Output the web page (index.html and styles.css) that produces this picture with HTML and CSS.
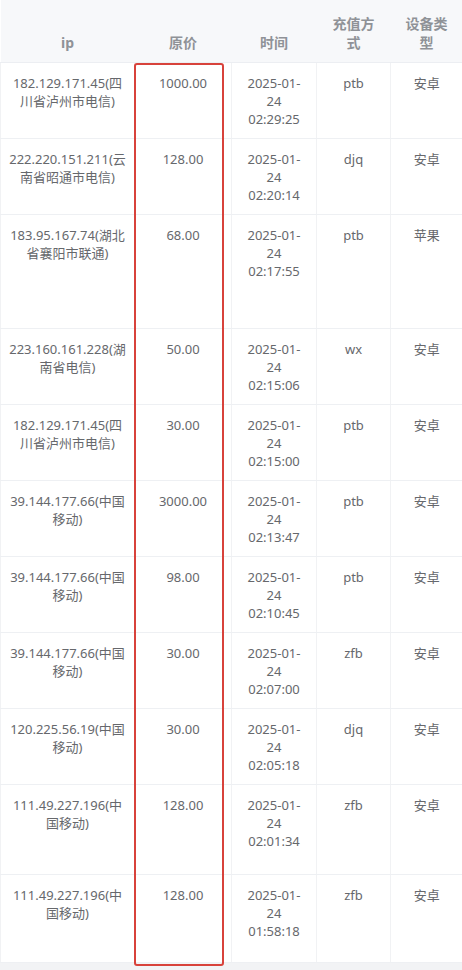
FILE: index.html
```html
<!DOCTYPE html>
<html lang="zh-CN">
<head>
<meta charset="utf-8">
<title>充值记录</title>
<link rel="stylesheet" href="styles.css">
</head>
<body>
<div class="wrap">
  <table class="grid">
    <colgroup>
      <col class="c-ip"><col class="c-price"><col class="c-time"><col class="c-pay"><col class="c-dev">
    </colgroup>
    <thead>
      <tr>
        <th>ip</th>
        <th>原价</th>
        <th>时间</th>
        <th>充值方<br>式</th>
        <th>设备类<br>型</th>
      </tr>
    </thead>
    <tbody>
      <tr class="h76">
        <td>182.129.171.45(四<br>川省泸州市电信)</td><td>1000.00</td><td>2025-01-<br>24<br>02:29:25</td><td>ptb</td><td>安卓</td>
      </tr>
      <tr class="h76">
        <td>222.220.151.211(云<br>南省昭通市电信)</td><td>128.00</td><td>2025-01-<br>24<br>02:20:14</td><td>djq</td><td>安卓</td>
      </tr>
      <tr class="h114">
        <td>183.95.167.74(湖北<br>省襄阳市联通)</td><td>68.00</td><td>2025-01-<br>24<br>02:17:55</td><td>ptb</td><td>苹果</td>
      </tr>
      <tr class="h76">
        <td>223.160.161.228(湖<br>南省电信)</td><td>50.00</td><td>2025-01-<br>24<br>02:15:06</td><td>wx</td><td>安卓</td>
      </tr>
      <tr class="h76">
        <td>182.129.171.45(四<br>川省泸州市电信)</td><td>30.00</td><td>2025-01-<br>24<br>02:15:00</td><td>ptb</td><td>安卓</td>
      </tr>
      <tr class="h76">
        <td>39.144.177.66(中国<br>移动)</td><td>3000.00</td><td>2025-01-<br>24<br>02:13:47</td><td>ptb</td><td>安卓</td>
      </tr>
      <tr class="h76">
        <td>39.144.177.66(中国<br>移动)</td><td>98.00</td><td>2025-01-<br>24<br>02:10:45</td><td>ptb</td><td>安卓</td>
      </tr>
      <tr class="h76">
        <td>39.144.177.66(中国<br>移动)</td><td>30.00</td><td>2025-01-<br>24<br>02:07:00</td><td>zfb</td><td>安卓</td>
      </tr>
      <tr class="h76">
        <td>120.225.56.19(中国<br>移动)</td><td>30.00</td><td>2025-01-<br>24<br>02:05:18</td><td>djq</td><td>安卓</td>
      </tr>
      <tr class="h90">
        <td>111.49.227.196(中<br>国移动)</td><td>128.00</td><td>2025-01-<br>24<br>02:01:34</td><td>zfb</td><td>安卓</td>
      </tr>
      <tr class="h88">
        <td>111.49.227.196(中<br>国移动)</td><td>128.00</td><td>2025-01-<br>24<br>01:58:18</td><td>zfb</td><td>安卓</td>
      </tr>
    </tbody>
  </table>
  <div class="highlight"></div>
</div>
</body>
</html>
```
FILE: styles.css
```css
html, body {
  margin: 0;
  padding: 0;
  background: #f2f3f5;
}
body {
  width: 462px;
  height: 970px;
  overflow: hidden;
  font-family: "Noto Sans", "Noto Sans CJK SC", sans-serif;
}
.wrap {
  position: relative;
  width: 462px;
  background: #ffffff;
}
.grid {
  width: 462px;
  border-collapse: collapse;
  table-layout: fixed;
}
.c-ip { width: 134px; }
.c-price { width: 97px; }
.c-time { width: 85px; }
.c-pay { width: 74px; }
.c-dev { width: 72px; }

.grid thead tr {
  height: 62px;
  background: #f7f8fa;
}
.grid th {
  font-size: 14px;
  font-weight: 700;
  color: #8f9297;
  line-height: 19px;
  vertical-align: bottom;
  padding: 0 6px 10px;
  text-align: center;
  border-bottom: 1px solid #eceef2;
}
.grid td {
  font-size: 13px;
  color: #66686c;
  line-height: 18px;
  vertical-align: top;
  text-align: center;
  padding: 11px 4px 0;
  border-bottom: 1px solid #eef0f3;
  border-left: 1px solid #f1f2f4;
  white-space: nowrap;
}
.grid td:first-child {
  border-left: 1px solid #f1f2f4;
}
.h76 { height: 76px; }
.h114 { height: 114px; }
.h90 { height: 90px; }
.h88 { height: 88px; }

.highlight {
  position: absolute;
  left: 134px;
  top: 63px;
  width: 86px;
  height: 899px;
  border: 2.5px solid #d8423b;
  border-radius: 3px;
}
```
